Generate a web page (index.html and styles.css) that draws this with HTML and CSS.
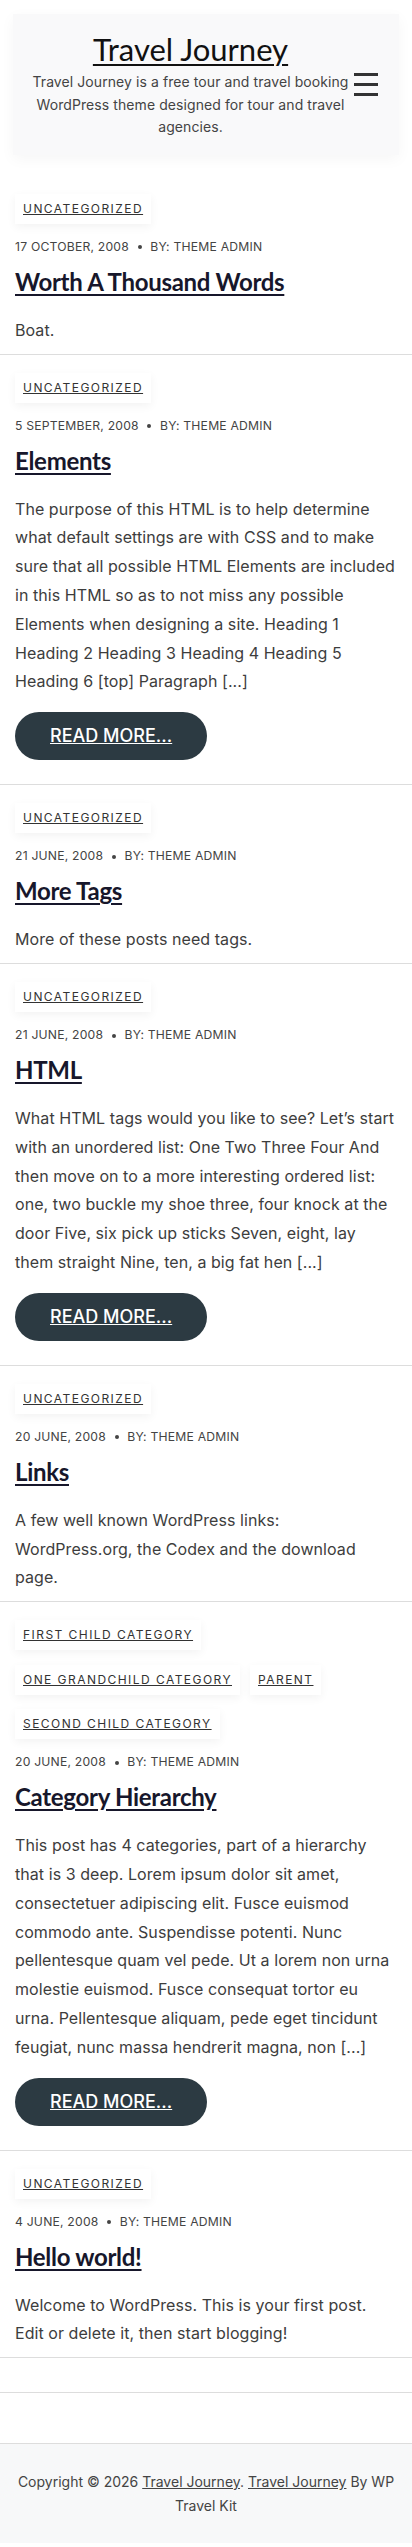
FILE: index.html
```html
<!DOCTYPE html>
<html lang="en">
<head>
    <meta charset="UTF-8">
    <meta name="viewport" content="width=device-width, initial-scale=1">
    <title>Travel Journey</title>
    <link rel="stylesheet" href="styles.css">
</head>
<body>

    <header class="site-header">
        <div class="header-box">
            <div class="branding">
                <p class="site-title"><a href="#">Travel Journey</a></p>
                <p class="site-desc">Travel Journey is a free tour and travel booking WordPress theme designed for tour and travel agencies.</p>
            </div>
            <button class="menu-toggle" aria-label="Menu">
                <span></span>
                <span></span>
                <span></span>
            </button>
        </div>
    </header>

    <main class="posts">

        <article class="post">
            <div class="cats"><a class="cat" href="#">Uncategorized</a></div>
            <div class="meta">17 October, 2008 <span class="dot"></span> By: Theme Admin</div>
            <h2 class="post-title"><a href="#">Worth A Thousand Words</a></h2>
            <p class="excerpt">Boat.</p>
        </article>

        <article class="post">
            <div class="cats"><a class="cat" href="#">Uncategorized</a></div>
            <div class="meta">5 September, 2008 <span class="dot"></span> By: Theme Admin</div>
            <h2 class="post-title"><a href="#">Elements</a></h2>
            <p class="excerpt">The purpose of this HTML is to help determine what default settings are with CSS and to make sure that all possible HTML Elements are included in this HTML so as to not miss any possible Elements when designing a site. Heading 1 Heading 2 Heading 3 Heading 4 Heading 5 Heading 6 [top] Paragraph [...]</p>
            <a class="read-more" href="#">Read More...</a>
        </article>

        <article class="post">
            <div class="cats"><a class="cat" href="#">Uncategorized</a></div>
            <div class="meta">21 June, 2008 <span class="dot"></span> By: Theme Admin</div>
            <h2 class="post-title"><a href="#">More Tags</a></h2>
            <p class="excerpt">More of these posts need tags.</p>
        </article>

        <article class="post">
            <div class="cats"><a class="cat" href="#">Uncategorized</a></div>
            <div class="meta">21 June, 2008 <span class="dot"></span> By: Theme Admin</div>
            <h2 class="post-title"><a href="#">HTML</a></h2>
            <p class="excerpt">What HTML tags would you like to see? Let’s start with an unordered list: One Two Three Four And then move on to a more interesting ordered list: one, two buckle my shoe three, four knock at the door Five, six pick up sticks Seven, eight, lay them straight Nine, ten, a big fat hen [...]</p>
            <a class="read-more" href="#">Read More...</a>
        </article>

        <article class="post">
            <div class="cats"><a class="cat" href="#">Uncategorized</a></div>
            <div class="meta">20 June, 2008 <span class="dot"></span> By: Theme Admin</div>
            <h2 class="post-title"><a href="#">Links</a></h2>
            <p class="excerpt">A few well known WordPress links: WordPress.org, the Codex and the download page.</p>
        </article>

        <article class="post">
            <div class="cats">
                <a class="cat" href="#">First Child Category</a>
                <a class="cat" href="#">One Grandchild Category</a>
                <a class="cat" href="#">Parent</a>
                <a class="cat" href="#">Second Child Category</a>
            </div>
            <div class="meta">20 June, 2008 <span class="dot"></span> By: Theme Admin</div>
            <h2 class="post-title"><a href="#">Category Hierarchy</a></h2>
            <p class="excerpt">This post has 4 categories, part of a hierarchy that is 3 deep. Lorem ipsum dolor sit amet, consectetuer adipiscing elit. Fusce euismod commodo ante. Suspendisse potenti. Nunc pellentesque quam vel pede. Ut a lorem non urna molestie euismod. Fusce consequat tortor eu urna. Pellentesque aliquam, pede eget tincidunt feugiat, nunc massa hendrerit magna, non [...]</p>
            <a class="read-more" href="#">Read More...</a>
        </article>

        <article class="post">
            <div class="cats"><a class="cat" href="#">Uncategorized</a></div>
            <div class="meta">4 June, 2008 <span class="dot"></span> By: Theme Admin</div>
            <h2 class="post-title"><a href="#">Hello world!</a></h2>
            <p class="excerpt">Welcome to WordPress. This is your first post. Edit or delete it, then start blogging!</p>
        </article>

        <nav class="pagination"></nav>
    </main>

    <footer class="site-footer">
        <p>Copyright &copy; 2026 <a href="#">Travel Journey</a>. <a href="#">Travel Journey</a> By WP Travel Kit</p>
    </footer>

</body>
</html>
```

FILE: styles.css
```css
body {
    margin: 0;
    font-family: Inter, "Liberation Sans", sans-serif;
    color: #3d3d3d;
    background-color: #fff;
}

a {
    color: inherit;
}

/* header */
.site-header {
    padding: 14px 13px 21px;
}

.header-box {
    display: flex;
    align-items: center;
    padding: 16px 21px 16px 18px;
    background-color: #f9f9fa;
    box-shadow: 0 4px 14px rgba(0, 0, 0, 0.04);
}

.branding {
    flex: 1;
    text-align: center;
}

.site-title {
    margin: 0;
    font-family: Lato, "Noto Sans", sans-serif;
    font-size: 31px;
    line-height: 38px;
    color: #111;
}

.site-title a {
    text-decoration-thickness: 2px;
    text-underline-offset: 3px;
}

.site-desc {
    margin: 3px 0 0;
    font-size: 14px;
    letter-spacing: 0.08px;
    line-height: 22.6px;
    color: #444;
}

.menu-toggle {
    display: flex;
    flex-direction: column;
    gap: 7px;
    width: 24px;
    margin-left: 4px;
    padding: 0;
    border: none;
    background: none;
    cursor: pointer;
}

.menu-toggle span {
    display: block;
    width: 24px;
    height: 3px;
    background-color: #333;
}

/* posts */
.post {
    padding: 18px 15px 9px;
    border-bottom: 1px solid #ddd;
}

.cats {
    display: flex;
    flex-wrap: wrap;
    gap: 14.5px 10px;
}

.cat {
    display: inline-block;
    height: 30px;
    padding: 0 8px;
    line-height: 30px;
    font-size: 12px;
    letter-spacing: 1.45px;
    text-transform: uppercase;
    color: #333;
    background-color: #fff;
    box-shadow: 0 3px 10px rgba(0, 0, 0, 0.05);
}

.meta {
    margin-top: 14px;
    font-size: 12.2px;
    letter-spacing: 0.2px;
    line-height: 18px;
    text-transform: uppercase;
    color: #444;
}

.dot {
    display: inline-block;
    width: 4px;
    height: 4px;
    margin: 0 5px;
    border-radius: 50%;
    background-color: #444;
    vertical-align: middle;
}

.post-title {
    margin: 9px 0 0;
    font-family: Lato, "Noto Sans", sans-serif;
    font-size: 24px;
    font-weight: 700;
    letter-spacing: -0.3px;
    line-height: 34px;
    color: #17172b;
}

.post-title a {
    text-underline-offset: 3px;
}

.excerpt {
    margin: 17px 0 0;
    font-size: 16px;
    letter-spacing: 0.06px;
    line-height: 28.8px;
}

.read-more {
    display: inline-block;
    margin: 16px 0 15px;
    padding: 0 35px;
    height: 48px;
    line-height: 48px;
    border-radius: 24px;
    background-color: #2c3a42;
    color: #fff;
    font-size: 18px;
    font-weight: 500;
    text-transform: uppercase;
}

.pagination {
    height: 34px;
    border-bottom: 1px solid #ddd;
}

/* footer */
.site-footer {
    margin-top: 50px;
    padding: 26px 15px 25px;
    border-top: 1px solid #ddd;
    background-color: #f7f8f9;
    text-align: center;
}

.site-footer p {
    margin: 0;
    font-size: 14px;
    line-height: 24px;
    color: #444;
}
```
